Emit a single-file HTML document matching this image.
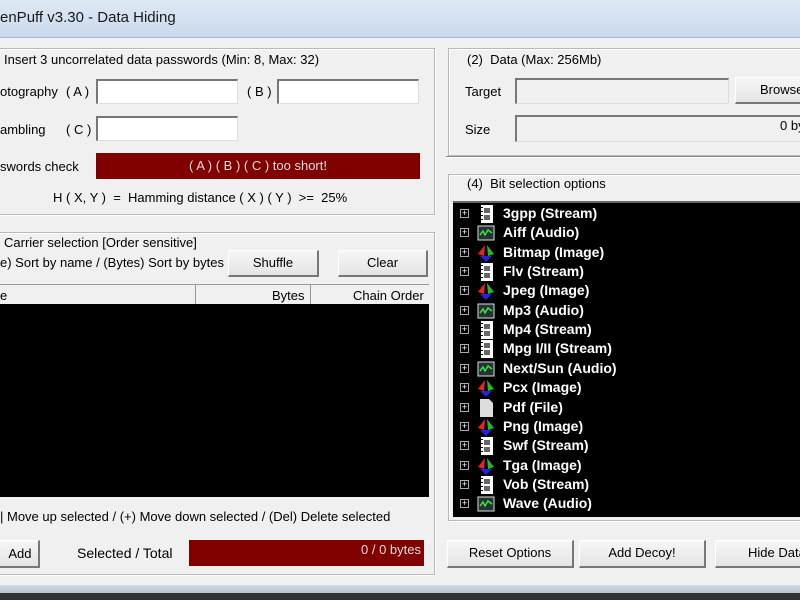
<!DOCTYPE html>
<html><head><style>
*{box-sizing:border-box;margin:0;padding:0}
body{width:800px;height:600px;overflow:hidden;background:#f0f0f0;font-family:"Liberation Sans",sans-serif;font-size:13px;color:#000;position:relative}
.a{position:absolute;white-space:nowrap}
.title{left:0;top:0;width:800px;height:38px;background:linear-gradient(#dfe9f5,#c9d9ec);border-bottom:1px solid #a9b8cc}
.grp{position:absolute;border:1px solid #b8b8b8;box-shadow:inset 1px 1px 0 #fff,1px 1px 0 #fff}
.leg{position:absolute;background:#f0f0f0;padding:0 4px;white-space:nowrap}
.inp{position:absolute;background:#fff;border-top:2px solid #777;border-left:2px solid #777;border-right:1px solid #ddd;border-bottom:1px solid #ddd}
.inp.g{background:#f0f0f0}
.btn{position:absolute;background:linear-gradient(#f6f6f6,#e4e4e4);border:1px solid #fff;border-right:2px solid #777;border-bottom:2px solid #777;text-align:center;line-height:24px;white-space:nowrap}
.red{position:absolute;background:#800000;color:#ddd}
.tree{left:453px;top:201px;width:347px;height:316px;background:#000;border-top:2px solid #666}
.it{position:absolute;left:0;height:19px;color:#fff;font-weight:bold;font-size:14px;line-height:19px}
.pl{position:absolute;left:7px;top:5px;width:9px;height:9px;border:1px solid #aaa;color:#fff;font-size:9px;line-height:7px;text-align:center;font-weight:normal}
.ic{position:absolute;left:24px;top:1px;width:18px;height:18px}
.tx{position:absolute;left:50px;white-space:nowrap}
</style></head><body>
<div class="a title"><div class="a" style="left:0;top:9px;font-size:15px;color:#1a1a1a">enPuff v3.30 - Data Hiding</div></div>

<div class="grp" style="left:-5px;top:48px;width:440px;height:167px"></div>
<div class="leg" style="left:0;top:52px">Insert 3 uncorrelated data passwords (Min: 8, Max: 32)</div>
<div class="a" style="left:0;top:84px">otography</div><div class="a" style="left:66px;top:84px">( A )</div>
<div class="inp" style="left:96px;top:79px;width:142px;height:25px"></div>
<div class="a" style="left:247px;top:84px">( B )</div>
<div class="inp" style="left:277px;top:79px;width:142px;height:25px"></div>
<div class="a" style="left:0;top:122px">ambling</div><div class="a" style="left:66px;top:122px">( C )</div>
<div class="inp" style="left:96px;top:116px;width:142px;height:25px"></div>
<div class="a" style="left:0;top:159px">swords check</div>
<div class="red" style="left:96px;top:153px;width:324px;height:26px;text-align:center;line-height:26px">( A ) ( B ) ( C ) too short!</div>
<div class="a" style="left:53px;top:190px">H ( X, Y )&nbsp; = &nbsp;Hamming distance ( X ) ( Y )&nbsp; &gt;= &nbsp;25%</div>

<div class="grp" style="left:-5px;top:232px;width:440px;height:343px"></div>
<div class="leg" style="left:0;top:235px">Carrier selection [Order sensitive]</div>
<div class="a" style="left:0;top:255px">e) Sort by name / (Bytes) Sort by bytes</div>
<div class="btn" style="left:228px;top:250px;width:91px;height:27px">Shuffle</div>
<div class="btn" style="left:338px;top:250px;width:90px;height:27px">Clear</div>
<div class="a" style="left:0;top:284px;width:429px;height:20px;background:#f0f0f0;border-top:1px solid #999">
 <div class="a" style="left:0;top:3px">e</div>
 <div class="a" style="left:195px;top:0;width:116px;height:19px;border-left:1px solid #999;border-right:1px solid #999"></div>
 <div class="a" style="left:272px;top:3px">Bytes</div>
 <div class="a" style="left:353px;top:3px">Chain Order</div>
</div>
<div class="a" style="left:0;top:304px;width:429px;height:193px;background:#000"></div>
<div class="a" style="left:0;top:509px">| Move up selected / (+) Move down selected / (Del) Delete selected</div>
<div class="btn" style="left:-10px;top:540px;width:50px;height:28px;line-height:26px">&nbsp;&nbsp;&nbsp;Add</div>
<div class="a" style="left:77px;top:545px;font-size:14px">Selected / Total</div>
<div class="red" style="left:189px;top:540px;width:235px;height:26px;text-align:right;padding:2px 3px">0 / 0 bytes</div>

<div class="grp" style="left:448px;top:48px;width:360px;height:108px"></div>
<div class="leg" style="left:463px;top:52px">(2)&nbsp; Data (Max: 256Mb)</div>
<div class="a" style="left:465px;top:84px">Target</div>
<div class="inp g" style="left:515px;top:78px;width:214px;height:26px"></div>
<div class="btn" style="left:735px;top:77px;width:80px;height:27px;text-align:left;padding-left:24px">Browse</div>
<div class="a" style="left:465px;top:122px">Size</div>
<div class="inp g" style="left:515px;top:115px;width:295px;height:27px"></div>
<div class="a" style="left:780px;top:118px">0 by</div>
<div class="a" style="left:446px;top:156px;width:354px;height:2px;border-top:1px solid #888;border-bottom:1px solid #fff"></div>

<div class="grp" style="left:448px;top:174px;width:360px;height:347px"></div>
<div class="leg" style="left:463px;top:176px">(4)&nbsp; Bit selection options</div>
<div class="a tree" id="t"></div>

<div class="btn" style="left:447px;top:540px;width:127px;height:28px">Reset Options</div>
<div class="btn" style="left:579px;top:540px;width:127px;height:28px">Add Decoy!</div>
<div class="btn" style="left:715px;top:540px;width:100px;height:28px;text-align:left;padding-left:32px">Hide Data</div>

<div class="a" style="left:0;top:585px;width:800px;height:8px;background:linear-gradient(#d0d8e2,#b8c4d2)"></div>
<div class="a" style="left:0;top:593px;width:800px;height:7px;background:#333"></div>

<script>
var items=[["3gpp (Stream)","s"],["Aiff (Audio)","a"],["Bitmap (Image)","i"],["Flv (Stream)","s"],["Jpeg (Image)","i"],["Mp3 (Audio)","a"],["Mp4 (Stream)","s"],["Mpg I/II (Stream)","s"],["Next/Sun (Audio)","a"],["Pcx (Image)","i"],["Pdf (File)","f"],["Png (Image)","i"],["Swf (Stream)","s"],["Tga (Image)","i"],["Vob (Stream)","s"],["Wave (Audio)","a"]];
var ic={s:'<svg class="ic" viewBox="0 0 18 18"><rect x="4" y="0" width="12" height="18" fill="#fff"/><rect x="7" y="3" width="6" height="5" fill="#666"/><rect x="7" y="10" width="6" height="5" fill="#666"/><rect x="4" y="2" width="2" height="1" fill="#000"/><rect x="4" y="6" width="2" height="1" fill="#000"/><rect x="4" y="10" width="2" height="1" fill="#000"/><rect x="4" y="14" width="2" height="1" fill="#000"/></svg>',
a:'<svg class="ic" viewBox="0 0 18 18"><rect x="1" y="2" width="16" height="14" fill="#233" stroke="#ddd"/><path d="M3 11 L6 7 L8 11 L11 6 L15 9" stroke="#4d4" stroke-width="1.5" fill="none"/></svg>',
i:'<svg class="ic" viewBox="0 0 18 18"><path d="M8 1 L1 10 L7 12Z" fill="#e22"/><path d="M10 1 L17 10 L11 12Z" fill="#2b2"/><path d="M3 12 L15 12 L9 18Z" fill="#22d"/></svg>',
f:'<svg class="ic" viewBox="0 0 18 18"><path d="M3 0 H12 L16 4 V18 H3Z" fill="#ddd"/></svg>'};
var h="";items.forEach(function(x,k){h+='<div class="it" style="top:'+(1+k*19.35)+'px;width:340px"><div class="pl">+</div>'+ic[x[1]]+'<div class="tx">'+x[0]+'</div></div>';});
document.getElementById("t").innerHTML=h;
</script>
</body></html>
